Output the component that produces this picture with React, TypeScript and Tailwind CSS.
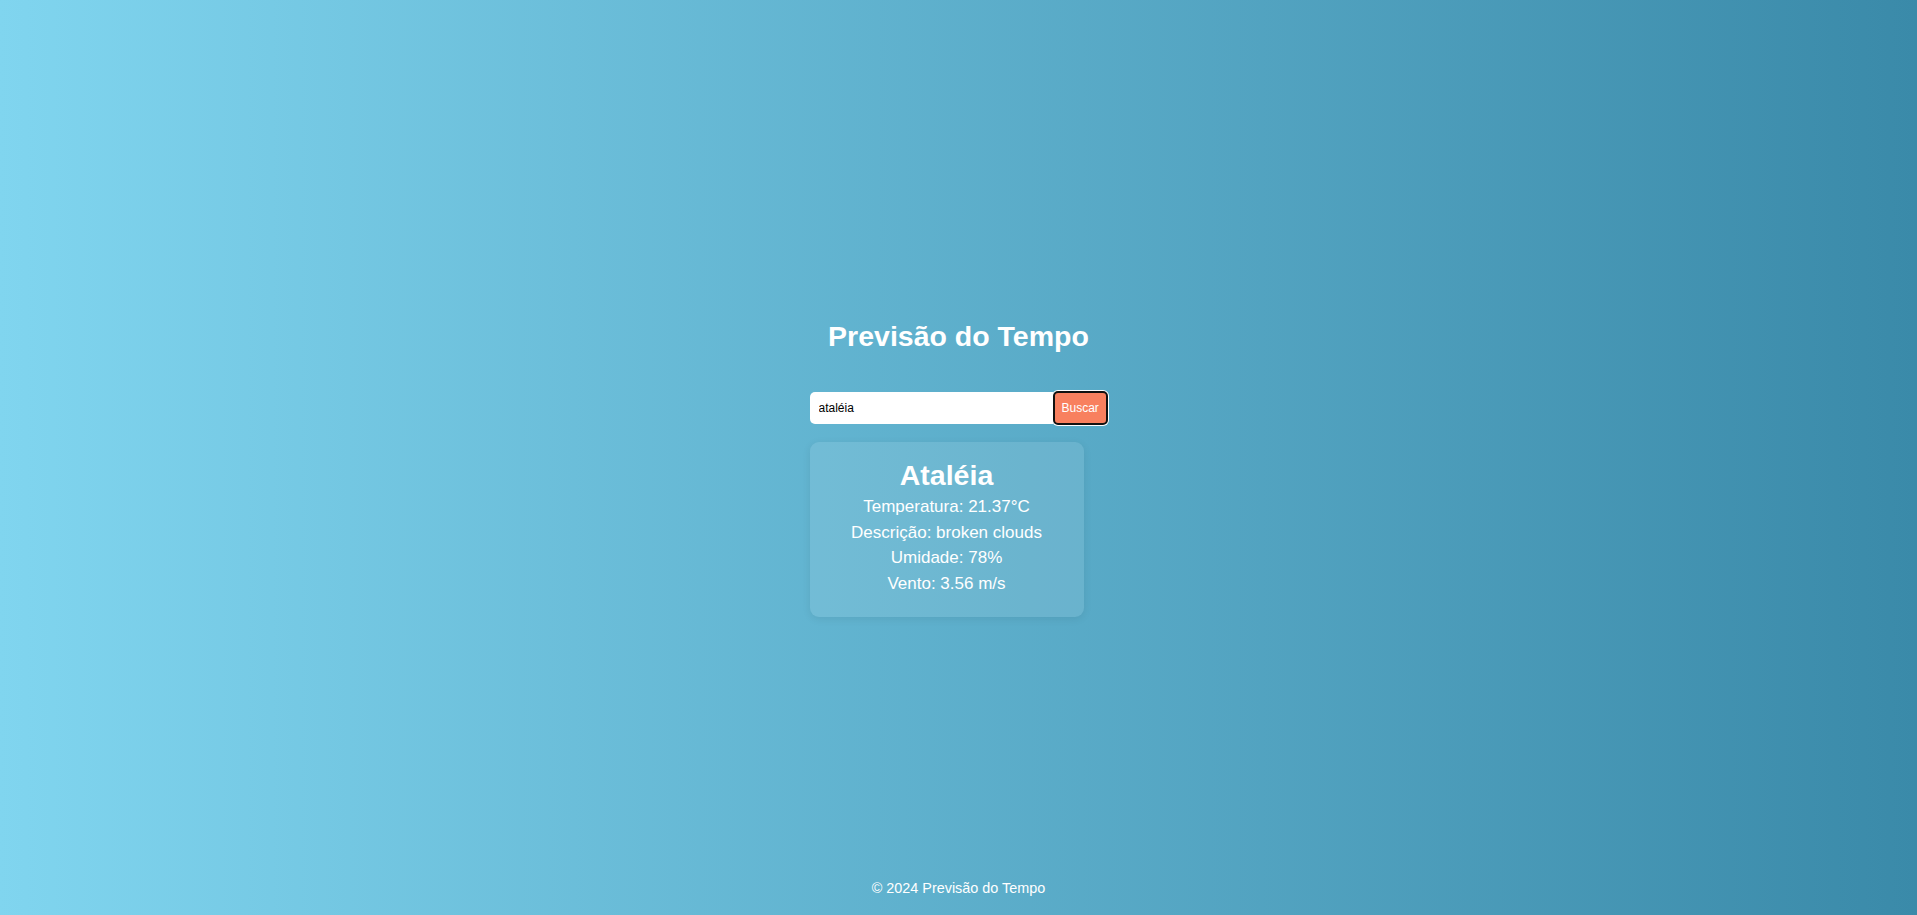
import React from 'react';

const weather = {
    city: 'Ataléia',
    temp: '21.37',
    description: 'broken clouds',
    humidity: 78,
    wind: '3.56',
};

export default function App() {
    return (
        <div className="h-screen overflow-hidden flex flex-col bg-gradient-to-r from-[#80d5ef] to-[#3a8aa9] text-white font-['Liberation_Sans',Arial,sans-serif]">
            <main className="flex-1 flex flex-col items-center pt-[320px]">
                <h1 className="text-[28.5px] font-bold leading-[33px] mb-[38px]">Previsão do Tempo</h1>

                <div className="w-[298px] flex flex-col items-start">
                    <div className="flex items-center">
                        <input
                            type="text"
                            defaultValue="ataléia"
                            className="w-[243px] h-[32px] bg-white text-black text-[12px] pl-[9px] rounded-l-[5px] outline-none font-['Liberation_Sans',Arial,sans-serif]"
                        />
                        <button className="h-[34px] px-[7px] bg-[#f8805f] text-white text-[12px] border-2 border-[#111] rounded-[5px] ring-1 ring-white font-['Liberation_Sans',Arial,sans-serif]">
                            Buscar
                        </button>
                    </div>

                    <div className="mt-[17px] w-[274px] pt-[17px] pb-[21px] rounded-[9px] bg-white/10 shadow-[0_2px_8px_rgba(0,0,0,0.08)] text-center">
                        <h2 className="text-[28.5px] font-bold leading-[32px] mb-[3px]">{weather.city}</h2>
                        <p className="text-[17px] leading-[25.5px]">Temperatura: {weather.temp}°C</p>
                        <p className="text-[17px] leading-[25.5px]">Descrição: {weather.description}</p>
                        <p className="text-[17px] leading-[25.5px]">Umidade: {weather.humidity}%</p>
                        <p className="text-[17px] leading-[25.5px]">Vento: {weather.wind} m/s</p>
                    </div>
                </div>
            </main>

            <footer className="pb-[18px] text-center text-[14.4px] leading-[17px]">
                © 2024 Previsão do Tempo
            </footer>
        </div>
    );
}
